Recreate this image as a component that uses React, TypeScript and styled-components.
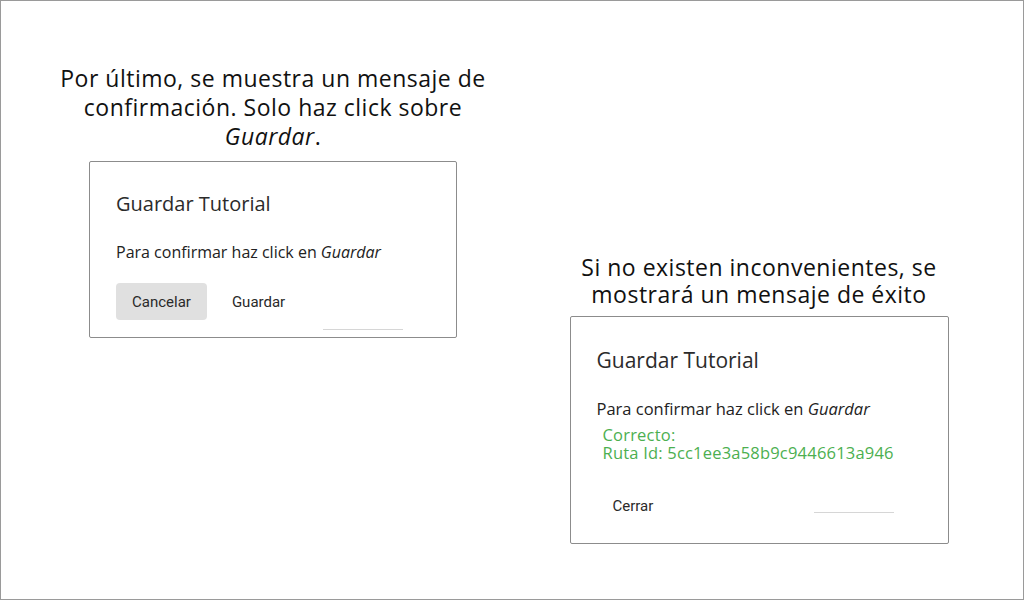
import React from "react";
import styled, { createGlobalStyle } from "styled-components";

const Global = createGlobalStyle`
  html, body { margin: 0; padding: 0; background: #ffffff; }
  * { box-sizing: border-box; }
`;

const Frame = styled.div`
  width: 1024px;
  height: 600px;
  border: 1px solid #9a9a9a;
  background: #ffffff;
  display: flex;
  align-items: flex-start;
  font-family: "Open Sans", "Noto Sans", sans-serif;
  color: #1a1a1a;
`;

const Column = styled.section<{ $width: number; $left: number; $top: number }>`
  width: ${(p) => p.$width}px;
  margin-left: ${(p) => p.$left}px;
  padding-top: ${(p) => p.$top}px;
  display: flex;
  flex-direction: column;
  align-items: center;
`;

const Caption = styled.p<{ $lh: number }>`
  margin: 0;
  text-align: center;
  font-size: 23px;
  letter-spacing: 0.5px;
  line-height: ${(p) => p.$lh}px;
  color: #111;
  white-space: nowrap;
`;

const Dialog = styled.div<{ $width: number; $top: number; $pt: number; $pb: number }>`
  width: ${(p) => p.$width}px;
  margin-top: ${(p) => p.$top}px;
  border: 1px solid #8c8c8c;
  border-radius: 2px;
  padding: ${(p) => p.$pt}px 26px ${(p) => p.$pb}px 26px;
  background: #fff;
  display: flex;
  flex-direction: column;
  align-items: flex-start;
`;

const Title = styled.h2<{ $size: number }>`
  margin: 0;
  font-weight: 400;
  font-size: ${(p) => p.$size}px;
  line-height: 24px;
  color: #2b2b2b;
`;

const Body = styled.p<{ $size: number; $gap: number }>`
  margin: ${(p) => p.$gap}px 0 0 0;
  font-size: ${(p) => p.$size}px;
  line-height: 20px;
  color: #222;
`;

const Success = styled.div`
  margin: 7px 0 0 6px;
  color: #4caf50;
  font-size: 16.5px;
  letter-spacing: 0.2px;
  line-height: 18px;
  font-weight: 500;
`;

const Actions = styled.div<{ $gap: number }>`
  margin-top: ${(p) => p.$gap}px;
  align-self: stretch;
  display: flex;
  align-items: center;
  gap: 9px;
`;

const Button = styled.button<{ $filled?: boolean }>`
  height: 37px;
  padding: 0 16px;
  border: none;
  border-radius: 4px;
  background: ${(p) => (p.$filled ? "#e0e0e0" : "transparent")};
  font-family: Roboto, "Liberation Sans", sans-serif;
  font-size: 15px;
  color: #2a2a2a;
  cursor: pointer;
`;

const Underline = styled.div<{ $drop: number; $right: number }>`
  margin-left: auto;
  margin-right: ${(p) => p.$right}px;
  width: 80px;
  height: 1px;
  background: #d6d6d6;
  align-self: flex-end;
  margin-bottom: ${(p) => -p.$drop}px;
`;

export default function App() {
  return (
    <>
      <Global />
      <Frame>
        <Column $width={440} $left={52} $top={63}>
          <Caption $lh={29}>
            Por último, se muestra un mensaje de
            <br />
            confirmación. Solo haz click sobre
            <br />
            <em>Guardar</em>.
          </Caption>
          <Dialog $width={368} $top={10} $pt={30} $pb={17}>
            <Title $size={20}>Guardar Tutorial</Title>
            <Body $size={16} $gap={26}>
              Para confirmar haz click en <em>Guardar</em>
            </Body>
            <Actions $gap={21}>
              <Button $filled>Cancelar</Button>
              <Button>Guardar</Button>
              <Underline $drop={10} $right={27} />
            </Actions>
          </Dialog>
        </Column>
        <Column $width={400} $left={66} $top={253}>
          <Caption $lh={27}>
            Si no existen inconvenientes, se
            <br />
            mostrará un mensaje de éxito
          </Caption>
          <Dialog $width={379} $top={8} $pt={31} $pb={19}>
            <Title $size={21}>Guardar Tutorial</Title>
            <Body $size={16.5} $gap={27}>
              Para confirmar haz click en <em>Guardar</em>
            </Body>
            <Success>
              Correcto:
              <br />
              Ruta Id: 5cc1ee3a58b9c9446613a946
            </Success>
            <Actions $gap={25}>
              <Button>Cerrar</Button>
              <Underline $drop={-11} $right={28} />
            </Actions>
          </Dialog>
        </Column>
      </Frame>
    </>
  );
}
